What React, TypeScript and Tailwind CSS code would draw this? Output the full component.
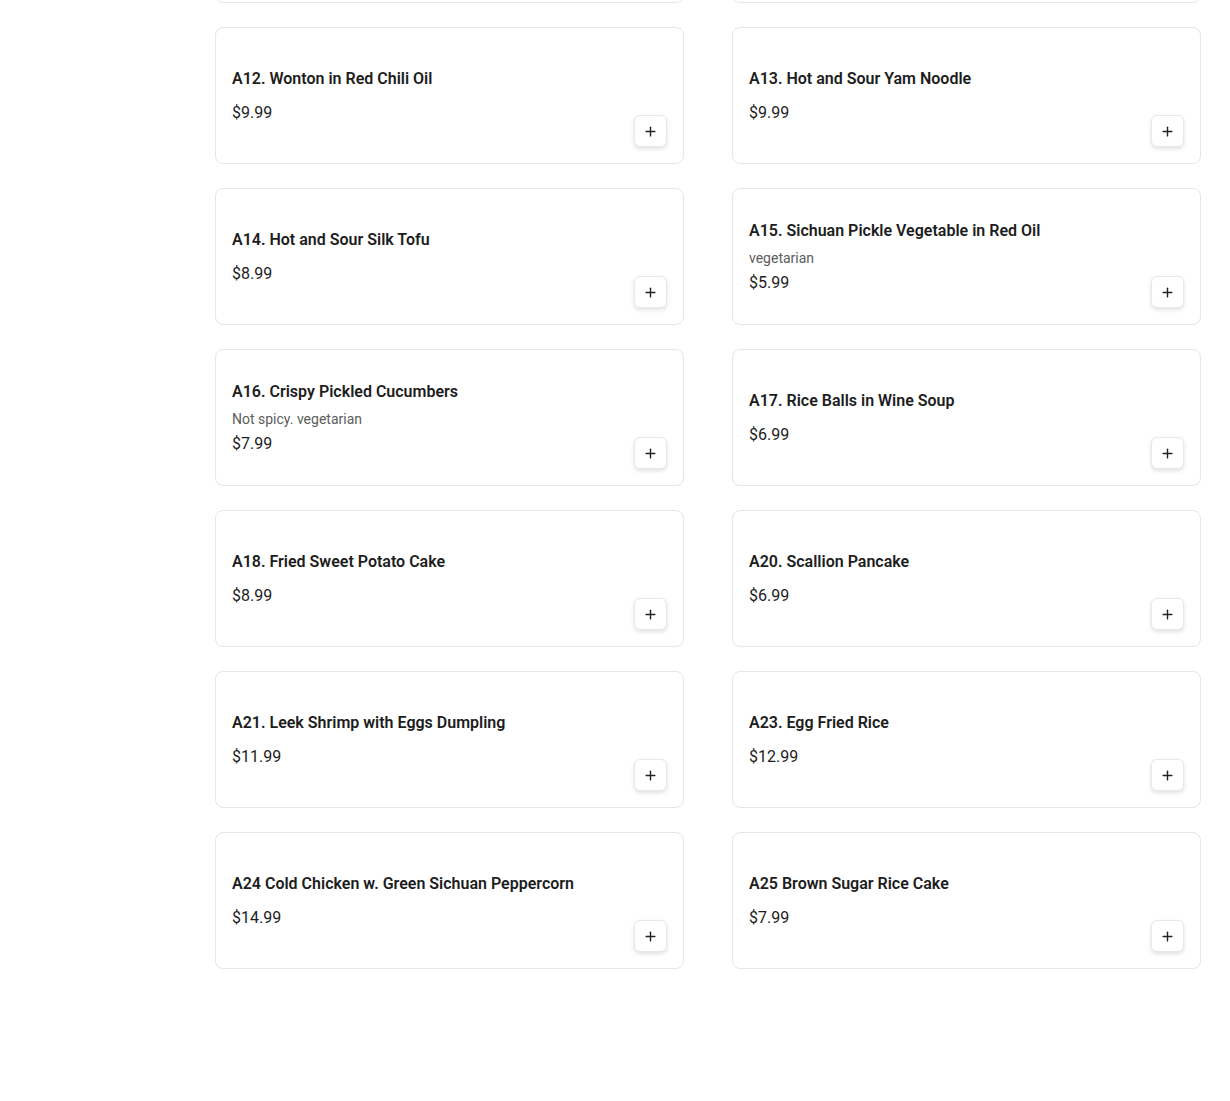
import { Plus } from 'lucide-react';

type Item = {
  name: string;
  price: string;
  note?: string;
};

const items: Item[] = [
  { name: 'A12. Wonton in Red Chili Oil', price: '$9.99' },
  { name: 'A13. Hot and Sour Yam Noodle', price: '$9.99' },
  { name: 'A14. Hot and Sour Silk Tofu', price: '$8.99' },
  { name: 'A15. Sichuan Pickle Vegetable in Red Oil', price: '$5.99', note: 'vegetarian' },
  { name: 'A16. Crispy Pickled Cucumbers', price: '$7.99', note: 'Not spicy. vegetarian' },
  { name: 'A17. Rice Balls in Wine Soup', price: '$6.99' },
  { name: 'A18. Fried Sweet Potato Cake', price: '$8.99' },
  { name: 'A20. Scallion Pancake', price: '$6.99' },
  { name: 'A21. Leek Shrimp with Eggs Dumpling', price: '$11.99' },
  { name: 'A23. Egg Fried Rice', price: '$12.99' },
  { name: 'A24 Cold Chicken w. Green Sichuan Peppercorn', price: '$14.99' },
  { name: 'A25 Brown Sugar Rice Cake', price: '$7.99' },
];

function MenuCard({ item }: { item: Item }) {
  return (
    <div className="relative flex h-[137px] flex-col justify-center rounded-lg border border-[#e6e6e6] bg-white px-4">
      <h3 className="text-base leading-6 font-semibold text-[#1d1d1d]">{item.name}</h3>
      {item.note && (
        <p className="mt-[5px] text-sm leading-5 text-[#5c5c5c]">{item.note}</p>
      )}
      <p className={`${item.note ? 'mt-[3px]' : 'mt-[10px]'} text-base leading-6 text-[#1d1d1d]`}>
        {item.price}
      </p>
      <button
        type="button"
        className="absolute right-4 bottom-4 flex h-8 w-[33px] items-center justify-center rounded-md border border-[#e8e8e8] bg-white text-[#222] shadow-[0_2px_4px_rgba(0,0,0,0.12)]"
      >
        <Plus size={15} strokeWidth={2.25} />
      </button>
    </div>
  );
}

export default function App() {
  return (
    <div className="flex min-h-[1101px] bg-white font-['Roboto','Liberation_Sans',sans-serif]">
      <aside className="w-[215px] shrink-0" />
      <main className="mt-[-134px] flex-1 pr-[29px] pb-[132px]">
        <div className="grid grid-cols-2 gap-x-12 gap-y-6">
          {/* previous row, scrolled out of view */}
          <div className="h-[137px] rounded-lg border border-[#e6e6e6] bg-white" />
          <div className="h-[137px] rounded-lg border border-[#e6e6e6] bg-white" />
          {items.map((item) => (
            <MenuCard key={item.name} item={item} />
          ))}
        </div>
      </main>
    </div>
  );
}
